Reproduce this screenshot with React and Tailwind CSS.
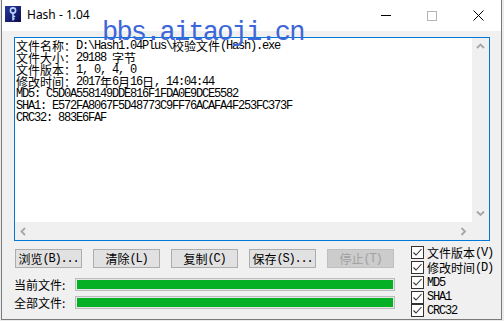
import React from 'react';

const CJK = /([\u3000-\u303f\u4e00-\u9fff\uff00-\uffef]+)/;

// SimSun-like mixed run: CJK at 12px, ASCII at 6px advance
function Sun({ text, className = '' }) {
  const parts = text.split(CJK).filter(Boolean);
  return (
    <span className={`inline-flex items-center whitespace-pre ${className}`}>
      {parts.map((p, i) =>
        CJK.test(p) ? (
          <span key={i} className="font-['Noto_Sans_CJK_SC',sans-serif] text-[12px] leading-[12px]">{p}</span>
        ) : (
          <span key={i} className="font-['Liberation_Mono',monospace] text-[12px] leading-[12px] tracking-[-1.2px]">{p}</span>
        )
      )}
    </span>
  );
}

function KeyIcon() {
  return (
    <svg width="16" height="16" viewBox="0 0 16 16" className="shrink-0">
      <defs>
        <linearGradient id="kbg" x1="0" y1="0" x2="1" y2="1">
          <stop offset="0" stopColor="#2a3a9a" />
          <stop offset="1" stopColor="#0a0a50" />
        </linearGradient>
      </defs>
      <rect x="0" y="0" width="16" height="16" fill="url(#kbg)" />
      <circle cx="8" cy="4.5" r="2.6" fill="none" stroke="#b8d4ff" strokeWidth="1.6" />
      <path d="M8 7v7.5M8 10.5h2.2M8 12.8h1.6" stroke="#b8d4ff" strokeWidth="1.6" fill="none" />
    </svg>
  );
}

function Chevron({ dir }) {
  const pts = {
    up: '1,5 4.5,1.5 8,5',
    down: '1,1.5 4.5,5 8,1.5',
    left: '5,1 1.5,4.5 5,8',
    right: '1.5,1 5,4.5 1.5,8',
  }[dir];
  const vertical = dir === 'up' || dir === 'down';
  return (
    <svg width={vertical ? 9 : 7} height={vertical ? 7 : 9} viewBox={vertical ? '0 0 9 7' : '0 0 7 9'}>
      <polyline points={pts} fill="none" stroke="#a6a6a6" strokeWidth="1.8" />
    </svg>
  );
}

function Button({ label, disabled }) {
  return (
    <div
      className={`w-[67px] h-[19px] flex items-center justify-center border ${
        disabled ? 'bg-[#cccccc] border-[#bfbfbf] text-[#a0a0a0]' : 'bg-[#e1e1e1] border-[#adadad] text-black'
      }`}
    >
      <Sun text={label} />
    </div>
  );
}

function Check({ label, h }) {
  return (
    <div className={`flex items-center gap-[3px] ${h}`}>
      <div className="w-[13px] h-[13px] bg-white border border-[#333333] flex items-center justify-center">
        <svg width="11" height="11" viewBox="0 0 11 11">
          <polyline points="1.5,5.5 4,8 9.5,2" fill="none" stroke="#333333" strokeWidth="1.1" />
        </svg>
      </div>
      <Sun text={label} />
    </div>
  );
}

function Bar({ label }) {
  return (
    <div className="flex items-center h-[13px]">
      <span className="w-[61px] font-['Noto_Sans_CJK_SC',sans-serif] text-[12px] leading-[12px] text-black">{label}</span>
      <div className="w-[320px] h-[13px] border border-[#bcbcbc] bg-[#e6e6e6] p-[1px]">
        <div className="w-full h-full bg-[#06b025]" />
      </div>
    </div>
  );
}

const lines = [
  '文件名称：D:\\Hash1.04Plus\\校验文件(Hash).exe',
  '文件大小：29188 字节',
  '文件版本：1, 0, 4, 0',
  '修改时间：2017年6月16日, 14:04:44',
  'MD5: C5D0A558149DDE816F1FDA0E9DCE5582',
  'SHA1: E572FA8067F5D48773C9FF76ACAFA4F253FC373F',
  'CRC32: 883E6FAF',
];

export default function App() {
  return (
    <div className="relative w-[504px] h-[321px] bg-[#ececec] overflow-hidden">
      <div className="ml-[1px] w-[501px] h-[320px] border-x border-b border-[#7a7a7a] bg-[#f0f0f0] flex flex-col">
        {/* title bar */}
        <div className="h-[31px] bg-white flex items-center shrink-0">
          <div className="ml-[3px] mt-[-3px]">
            <KeyIcon />
          </div>
          <span className="ml-[6px] mt-[-2px] font-['Noto_Sans',sans-serif] text-[12px] text-black">Hash - 1.04</span>
          <div className="ml-auto flex h-full">
            <div className="w-[46px] h-full flex items-center justify-center">
              <div className="w-[10px] h-[1px] bg-black" />
            </div>
            <div className="w-[46px] h-full flex items-center justify-center">
              <div className="w-[10px] h-[10px] border border-[#b5b5b5]" />
            </div>
            <div className="w-[46px] h-full flex items-center justify-center">
              <svg width="11" height="11" viewBox="0 0 11 11">
                <path d="M0.5 0.5L10.5 10.5M10.5 0.5L0.5 10.5" stroke="#000" strokeWidth="1" />
              </svg>
            </div>
          </div>
        </div>

        {/* result box */}
        <div className="ml-[12px] mt-[6px] w-[476px] h-[204px] border border-[#0078d7] bg-[#f0f0f0] grid grid-cols-[457px_17px] grid-rows-[184px_18px]">
          <div className="bg-white pl-[1px] pt-[2px] text-black overflow-hidden">
            {lines.map((l) => (
              <div key={l} className="h-[12px] flex items-center">
                <Sun text={l} />
              </div>
            ))}
          </div>
          <div className="flex flex-col justify-between items-center py-[5px]">
            <Chevron dir="up" />
            <Chevron dir="down" />
          </div>
          <div className="flex justify-between items-center px-[5px]">
            <Chevron dir="left" />
            <Chevron dir="right" />
          </div>
          <div />
        </div>

        {/* controls */}
        <div className="flex">
          <div className="ml-[12px] w-[381px] pt-[8px] flex flex-col">
            <div className="ml-[1px] flex gap-[11px]">
              <Button label="浏览(B)..." />
              <Button label="清除(L)" />
              <Button label="复制(C)" />
              <Button label="保存(S)..." />
              <Button label="停止(T)" disabled />
            </div>
            <div className="mt-[10px] flex flex-col gap-[5px]">
              <Bar label="当前文件:" />
              <Bar label="全部文件:" />
            </div>
          </div>
          <div className="ml-[16px] pt-[4px] flex flex-col text-black">
            <Check label="文件版本(V)" h="h-[15px]" />
            <Check label="修改时间(D)" h="h-[15px]" />
            <Check label="MD5" h="h-[15px]" />
            <Check label="SHA1" h="h-[14px]" />
            <Check label="CRC32" h="h-[13px]" />
          </div>
        </div>
      </div>

      {/* watermark */}
      <div className="absolute left-[102px] top-[20px] pointer-events-none font-['Liberation_Mono',monospace] text-[27px] leading-[27px] tracking-[-1.8px] text-[#3d66d9] whitespace-pre">
        bbs.aitaoji.cn
      </div>
    </div>
  );
}
